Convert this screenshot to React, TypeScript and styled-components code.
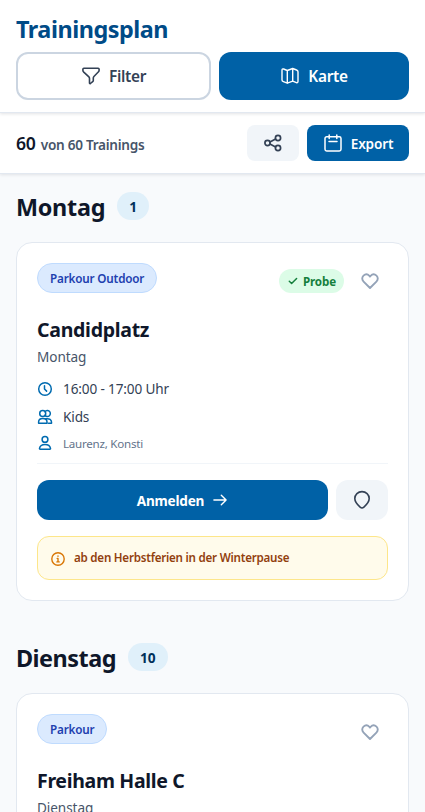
import React from 'react';
import styled, { createGlobalStyle } from 'styled-components';

const GlobalStyle = createGlobalStyle`
  * { box-sizing: border-box; }
  body { margin: 0; background: #f8fafc; color: #0f172a; font-family: "Noto Sans", sans-serif; height: 812px; overflow: hidden; }
  h1, h2, h3, p { margin: 0; }
  button { font-family: inherit; border: 0; padding: 0; margin: 0; background: none; }
`;

const Page = styled.div`
  height: 812px;
  overflow: hidden;
`;

const Header = styled.header`
  display: flex;
  flex-direction: column;
  height: 113px;
  padding: 12px 16px;
  background: #fff;
  border-bottom: 1px solid #e2e8f0;
  box-shadow: 0 1px 3px rgba(15, 23, 42, 0.12);
  position: relative;
  z-index: 2;
`;

const PageTitle = styled.h1`
  height: 40px;
  line-height: 35px;
  font-size: 23.4px;
  font-weight: 700;
  letter-spacing: -0.47px;
  color: #004b87;
`;

const HeaderActions = styled.div`
  display: grid;
  grid-template-columns: 195px 190px;
  gap: 8px;
`;

const HeaderButton = styled.button<{ $primary?: boolean }>`
  display: flex;
  align-items: center;
  justify-content: center;
  gap: 8px;
  height: 48px;
  border-radius: 12px;
  border: ${p => (p.$primary ? '0' : '2px solid #cbd5e1')};
  background: ${p => (p.$primary ? '#0061a6' : '#fff')};
  color: ${p => (p.$primary ? '#fff' : '#334155')};
  font-size: 15.4px;
  font-weight: 600;
  letter-spacing: -0.32px;
`;

const ResultBar = styled.div`
  display: flex;
  align-items: center;
  gap: 8px;
  height: 61px;
  padding: 0 16px;
  background: #fff;
  border-bottom: 1px solid #e2e8f0;
  box-shadow: 0 1px 3px rgba(15, 23, 42, 0.1);
`;

const ResultText = styled.p`
  flex: 1;
  font-size: 13.6px;
  line-height: 28px;
  padding-top: 2px;
  font-weight: 600;
  letter-spacing: -0.27px;
  color: #475569;
`;

const ResultCount = styled.span`
  font-size: 17.6px;
  letter-spacing: -0.2px;
  margin-right: 5px;
  color: #0f172a;
`;

const ToolButton = styled.button<{ $primary?: boolean }>`
  display: flex;
  align-items: center;
  justify-content: center;
  gap: 8px;
  width: ${p => (p.$primary ? '102px' : '52px')};
  height: 36px;
  border-radius: 8px;
  background: ${p => (p.$primary ? '#0061a6' : '#f1f5f9')};
  color: ${p => (p.$primary ? '#fff' : '#334155')};
  font-size: 13.6px;
  font-weight: 600;
  letter-spacing: -0.17px;
`;

const DaySection = styled.section`
  padding: 18px 16px 24px;
`;

const DayHeading = styled.div`
  display: flex;
  align-items: flex-start;
  gap: 12px;
  height: 50px;
`;

const DayName = styled.h2<{ $tracking: string }>`
  font-size: 23.4px;
  line-height: 31px;
  font-weight: 700;
  letter-spacing: ${p => p.$tracking};
`;

const CountPill = styled.span`
  display: flex;
  align-items: center;
  height: 28px;
  padding: 0 12px;
  border-radius: 14px;
  background: #e0f0fa;
  color: #00305a;
  font-size: 13.7px;
  font-weight: 700;
`;

const Card = styled.article`
  padding: 20px;
  border: 1px solid #e2e8f0;
  border-radius: 16px;
  background: #fff;
`;

const CardTop = styled.div`
  display: flex;
  align-items: flex-start;
  justify-content: space-between;
  height: 48px;
`;

const CategoryTag = styled.span`
  display: flex;
  align-items: center;
  height: 30px;
  padding: 0 12px;
  border: 1px solid #bfdbfe;
  border-radius: 15px;
  background: #dbeafe;
  color: #1e40af;
  font-size: 11.7px;
  font-weight: 600;
  letter-spacing: -0.18px;
`;

const CardMarks = styled.div`
  display: flex;
  align-items: center;
  gap: 8px;
  height: 36px;
`;

const TrialBadge = styled.span`
  display: flex;
  align-items: center;
  gap: 4px;
  height: 24px;
  padding: 0 8px;
  border-radius: 12px;
  background: #dcfce7;
  color: #15803d;
  font-size: 11.6px;
  font-weight: 700;
  letter-spacing: -0.12px;
`;

const FavoriteButton = styled.button`
  display: grid;
  place-items: center;
  width: 36px;
  height: 36px;
  color: #94a3b8;
`;

const VenueName = styled.h3<{ $tracking: string }>`
  height: 36px;
  font-size: 19.5px;
  line-height: 38px;
  font-weight: 700;
  letter-spacing: ${p => p.$tracking};
`;

const VenueDay = styled.p`
  font-size: 13.6px;
  line-height: 19px;
  height: 20px;
  letter-spacing: -0.08px;
  color: #475569;
`;

const Details = styled.div`
  display: flex;
  flex-direction: column;
  gap: 8px;
  padding: 12px 0;
  border-bottom: 1px solid #f1f5f9;
`;

const Detail = styled.div<{ $minor?: boolean }>`
  display: flex;
  align-items: center;
  gap: 10px;
  height: ${p => (p.$minor ? '16px' : '20px')};
  line-height: ${p => (p.$minor ? 'normal' : '18px')};
  font-size: ${p => (p.$minor ? '11.6px' : '13.6px')};
  letter-spacing: ${p => (p.$minor ? '-0.25px' : '-0.14px')};
  color: ${p => (p.$minor ? '#64748b' : '#334155')};
  svg { color: #006bb0; }
`;

const CardActions = styled.div`
  display: flex;
  gap: 8px;
  padding: 16px 0;
`;

const SignUpButton = styled.button`
  flex: 1;
  display: flex;
  align-items: center;
  justify-content: center;
  gap: 8px;
  height: 40px;
  border-radius: 12px;
  background: #0061a6;
  color: #fff;
  font-size: 13.6px;
  font-weight: 700;
  letter-spacing: -0.24px;
`;

const PlaceButton = styled.button`
  display: grid;
  place-items: center;
  width: 52px;
  height: 40px;
  border-radius: 12px;
  background: #f1f5f9;
  color: #334155;
`;

const Notice = styled.p`
  display: flex;
  align-items: center;
  gap: 8px;
  height: 44px;
  padding: 0 12px 1px;
  border: 1px solid #fde68a;
  border-radius: 12px;
  background: #fffbeb;
  color: #92400e;
  font-size: 11.6px;
  font-weight: 600;
  letter-spacing: -0.24px;
  svg { color: #d97706; margin-top: 2px; }
`;

const Glyph = styled.svg`
  display: block;
  flex: none;
  fill: none;
  stroke: currentColor;
  stroke-linecap: round;
  stroke-linejoin: round;
`;

const FilterIcon = () => (
  <Glyph width="20" height="20" viewBox="0 0 20 20" strokeWidth="1.6">
    <path d="M2.900 2.300h14.200c.6 0 1 .4 1 1v1c0 .6-.2 1.100-.6 1.500l-4.600 4.700c-.4.400-.6.900-.6 1.400v2.500c0 .5-.2.900-.6 1.200l-2.300 1.900c-.4.300-.9.100-.9-.5v-4.600c0-.6-.2-1.100-.6-1.500L2.500 5.800c-.4-.4-.6-.9-.6-1.500v-1c0-.6.4-1 1-1z" />
  </Glyph>
);

const MapIcon = () => (
  <Glyph width="20" height="20" viewBox="0 0 20 20" strokeWidth="1.4">
    <path d="M2 4.400c0-1.200.6-1.800 1.600-1.400L7.300 4.500l5.400-2 3.900 1.500c.9.300 1.400.8 1.400 1.700v9.600c0 1.200-.6 1.700-1.600 1.300l-3.700-1.400-5.400 2-3.900-1.500C2.500 15.400 2 14.900 2 14zM7.300 4.500v12.700M12.700 2.500v12.700" />
  </Glyph>
);

const ShareIcon = () => (
  <Glyph width="20" height="20" viewBox="0 0 20 20" strokeWidth="1.7">
    <circle cx="4.500" cy="10" r="2.600" />
    <circle cx="15" cy="5" r="2.600" />
    <circle cx="15" cy="15" r="2.600" />
    <path d="m6.900 8.900 5.700-2.800M6.900 11.100l5.700 2.800" />
  </Glyph>
);

const CalendarIcon = () => (
  <Glyph width="20" height="20" viewBox="0 0 20 20" strokeWidth="1.5">
    <rect x="2" y="3.700" width="16" height="14.300" rx="1.700" />
    <path d="M6.200 2v3.500M13.800 2v3.500M6 8.500h8" />
  </Glyph>
);

const CheckIcon = () => (
  <Glyph width="12" height="12" viewBox="0 0 12 12" strokeWidth="1.500">
    <path d="m2.300 6.300 2.300 2.200 5-5" />
  </Glyph>
);

const HeartIcon = () => (
  <Glyph width="20" height="20" viewBox="0 0 20 20" strokeWidth="1.900">
    <path d="m10 17-6.400-6.400C1.800 8.800 1.800 6.200 3.500 4.600c1.700-1.500 4.200-1.500 5.900.2l.6.800.6-.8c1.700-1.700 4.200-1.700 5.900-.2 1.700 1.600 1.700 4.200-.1 6z" />
  </Glyph>
);

const ClockIcon = () => (
  <Glyph width="16" height="16" viewBox="0 0 16 16" strokeWidth="1.500">
    <circle cx="8" cy="8" r="6.300" />
    <path d="M7.500 4.800V8l2.100 2.100" />
  </Glyph>
);

const GroupIcon = () => (
  <Glyph width="16" height="16" viewBox="0 0 16 16" strokeWidth="1.500">
    <circle cx="5.700" cy="4.500" r="3" />
    <path d="M8 2.600a3 3 0 1 1 0 3.800M1.600 14.300v-1.200c0-2.200 1.600-3.500 4.200-3.500s4.200 1.300 4.200 3.500v1.200zM9.300 9.700c3.100-.4 5.200 1 5.200 3.400v1.200h-3" />
  </Glyph>
);

const PersonIcon = () => (
  <Glyph width="16" height="16" viewBox="0 0 16 16" strokeWidth="1.500">
    <circle cx="8" cy="4.400" r="2.900" />
    <path d="M3.200 14.200c-.5 0-.8-.3-.7-.8.5-2.400 2.500-3.900 5.500-3.900s5 1.500 5.500 3.900c.1.500-.2.800-.7.800z" />
  </Glyph>
);

const ArrowIcon = () => (
  <Glyph width="16" height="16" viewBox="0 0 16 16" strokeWidth="1.400">
    <path d="M1.900 8h12.200M9.300 3.200 14.100 8l-4.800 4.800" />
  </Glyph>
);

const PinIcon = () => (
  <Glyph width="20" height="20" viewBox="0 0 20 20" strokeWidth="1.600">
    <path d="M10 18c-.7 0-1.300-.4-1.900-.9-3-2.600-5.300-5.500-5.300-8.500a7.200 7 0 0 1 14.400 0c0 3-2.300 5.900-5.300 8.500-.6.5-1.200.9-1.900.9z" />
  </Glyph>
);

const InfoIcon = () => (
  <Glyph width="16" height="16" viewBox="0 0 16 16" strokeWidth="1.400">
    <circle cx="8" cy="8" r="6.200" />
    <path d="M7.200 7.400H8v3.400M6.900 10.900h2.300M8 5v.2" />
  </Glyph>
);

export default function App() {
  return (
    <>
      <GlobalStyle />
      <Page>
        <Header>
          <PageTitle>Trainingsplan</PageTitle>
          <HeaderActions>
            <HeaderButton><FilterIcon />Filter</HeaderButton>
            <HeaderButton $primary><MapIcon />Karte</HeaderButton>
          </HeaderActions>
        </Header>
        <ResultBar>
          <ResultText><ResultCount>60</ResultCount>von 60 Trainings</ResultText>
          <ToolButton aria-label="Teilen"><ShareIcon /></ToolButton>
          <ToolButton $primary><CalendarIcon />Export</ToolButton>
        </ResultBar>
        <DaySection>
          <DayHeading>
            <DayName $tracking="-0.28px">Montag</DayName>
            <CountPill>1</CountPill>
          </DayHeading>
          <Card>
            <CardTop>
              <CategoryTag>Parkour Outdoor</CategoryTag>
              <CardMarks>
                <TrialBadge><CheckIcon />Probe</TrialBadge>
                <FavoriteButton aria-label="Merken"><HeartIcon /></FavoriteButton>
              </CardMarks>
            </CardTop>
            <VenueName $tracking="-0.28px">Candidplatz</VenueName>
            <VenueDay>Montag</VenueDay>
            <Details>
              <Detail><ClockIcon />16:00 - 17:00 Uhr</Detail>
              <Detail><GroupIcon />Kids</Detail>
              <Detail $minor><PersonIcon />Laurenz, Konsti</Detail>
            </Details>
            <CardActions>
              <SignUpButton>Anmelden<ArrowIcon /></SignUpButton>
              <PlaceButton aria-label="Ort"><PinIcon /></PlaceButton>
            </CardActions>
            <Notice><InfoIcon />ab den Herbstferien in der Winterpause</Notice>
          </Card>
        </DaySection>
        <DaySection>
          <DayHeading>
            <DayName $tracking="-0.5px">Dienstag</DayName>
            <CountPill>10</CountPill>
          </DayHeading>
          <Card>
            <CardTop>
              <CategoryTag>Parkour</CategoryTag>
              <CardMarks>
                <FavoriteButton aria-label="Merken"><HeartIcon /></FavoriteButton>
              </CardMarks>
            </CardTop>
            <VenueName $tracking="-0.33px">Freiham Halle C</VenueName>
            <VenueDay>Dienstag</VenueDay>
          </Card>
        </DaySection>
      </Page>
    </>
  );
}
